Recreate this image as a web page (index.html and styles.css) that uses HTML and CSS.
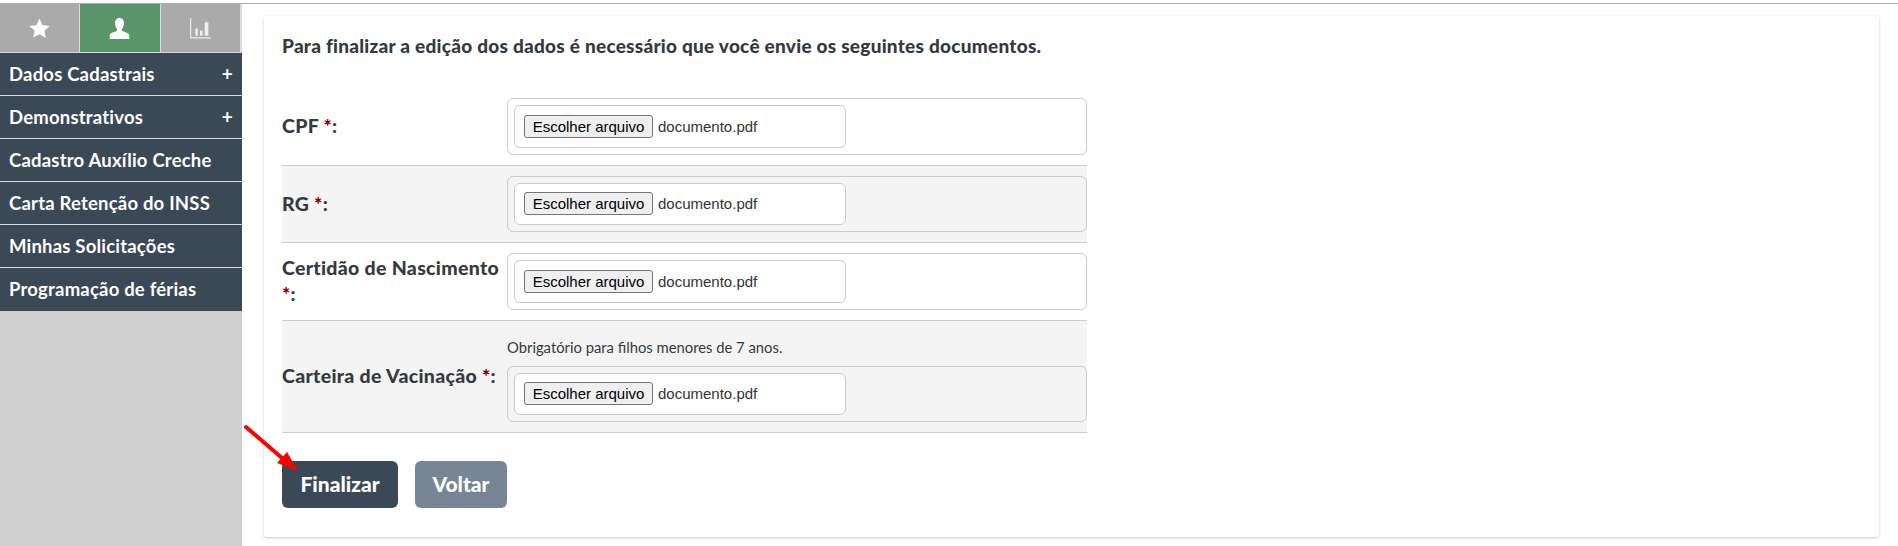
FILE: index.html
```html
<!DOCTYPE html>
<html lang="pt-BR">
<head>
<meta charset="utf-8">
<title>Finalizar edição</title>
<link rel="stylesheet" href="styles.css">
</head>
<body>
<div class="page">
  <aside class="sidebar">
    <div class="tabs">
      <div class="tab">
        <svg width="21" height="21" viewBox="0 0 20 20"><path fill="#fff" d="M10 .5l2.900 6.400 6.900.7-5.200 4.600 1.500 6.800L10 15.500 3.900 18.600l1.500-6.800L.2 7.600l6.900-.7z"/></svg>
      </div>
      <div class="tab tab-active">
        <svg width="21" height="21" viewBox="0 0 20 20"><path fill="#fff" d="M10 0c3 0 4.200 2.200 4.200 5 0 2.400-.8 4.300-1.800 5.500-.5.600-.4 1.500.3 1.800 2.400 1 6.600 1.800 6.600 4.200V20H.7v-3.500c0-2.400 4.200-3.200 6.600-4.200.7-.3.8-1.200.3-1.800C6.600 9.300 5.800 7.400 5.800 5 5.800 2.200 7 0 10 0z"/></svg>
      </div>
      <div class="tab">
        <svg width="21" height="21" viewBox="0 0 20 20"><path fill="none" stroke="#eee" stroke-width="1.100" d="M.6 0v19H20"/><path fill="#eee" d="M5 10h2.500v7H5zM9.500 12H12v5H9.500zM14 4h3.500v13H14z"/></svg>
      </div>
    </div>
    <nav class="menu">
      <a class="menu-item"><span>Dados Cadastrais</span><b class="plus">+</b></a>
      <a class="menu-item"><span>Demonstrativos</span><b class="plus">+</b></a>
      <a class="menu-item"><span>Cadastro Auxílio Creche</span></a>
      <a class="menu-item"><span>Carta Retenção do INSS</span></a>
      <a class="menu-item"><span>Minhas Solicitações</span></a>
      <a class="menu-item"><span>Programação de férias</span></a>
    </nav>
  </aside>
  <main class="main">
    <section class="card">
      <h1 class="title">Para finalizar a edição dos dados é necessário que você envie os seguintes documentos.</h1>
      <form class="form">
        <div class="row">
          <label class="label">CPF <i>*</i>:</label>
          <div class="field">
            <div class="box"><div class="file"><button type="button" class="file-btn">Escolher arquivo</button><span class="file-name">documento.pdf</span></div></div>
          </div>
        </div>
        <div class="row row-alt">
          <label class="label">RG <i>*</i>:</label>
          <div class="field">
            <div class="box"><div class="file"><button type="button" class="file-btn">Escolher arquivo</button><span class="file-name">documento.pdf</span></div></div>
          </div>
        </div>
        <div class="row">
          <label class="label">Certidão de Nascimento <i>*</i>:</label>
          <div class="field">
            <div class="box"><div class="file"><button type="button" class="file-btn">Escolher arquivo</button><span class="file-name">documento.pdf</span></div></div>
          </div>
        </div>
        <div class="row row-alt row-hint">
          <label class="label">Carteira de Vacinação <i>*</i>:</label>
          <div class="field">
            <p class="hint">Obrigatório para filhos menores de 7 anos.</p>
            <div class="box"><div class="file"><button type="button" class="file-btn">Escolher arquivo</button><span class="file-name">documento.pdf</span></div></div>
          </div>
        </div>
        <div class="actions">
          <button type="button" class="btn btn-primary">Finalizar</button>
          <button type="button" class="btn btn-secondary">Voltar</button>
        </div>
      </form>
    </section>
  </main>
</div>
<svg class="arrow" width="60" height="52" viewBox="0 0 60 52"><path d="M3 3L46 40" stroke="#f00" stroke-width="4" stroke-linecap="round" fill="none"/><path d="M55 47L34 39L44 28z" fill="#f00"/></svg>
</body>
</html>
```

FILE: styles.css
```css
* { box-sizing: border-box; }
html, body { margin: 0; height: 100%; }
body {
  padding-top: 3px;
  background: #fff;
  font-family: "Lato", "Open Sans", sans-serif;
  color: #343a40;
  overflow: hidden;
  position: relative;
}
.page {
  display: flex;
  height: 543px;
  border-top: 1px solid #aaa;
}
.sidebar {
  width: 242px;
  flex: none;
  background: #cfcfcf;
}
.tabs {
  display: flex;
  height: 49px;
  border-bottom: 1px solid #d9d9d9;
}
.tab {
  flex: 1;
  background: #aaa;
  display: flex;
  align-items: center;
  justify-content: center;
  border-left: 1px solid #ddd;
}
.tab:first-child { border-left: 0; }
.tab:last-child { border-right: 2px solid #ddd; }
.tab-active { background: #5a9669; }
.menu-item {
  display: flex;
  justify-content: space-between;
  align-items: center;
  height: 43px;
  padding: 0 9px 1px;
  background: #3b4856;
  border-bottom: 1px solid #d9d9d9;
  color: #fff;
  font-size: 18.5px;
  font-weight: 700;
  letter-spacing: .2px;
}
.menu-item:last-child { border-bottom: 0; }
.plus { font-size: 19px; font-weight: 700; }
.main {
  flex: 1;
  padding: 12px 19px 8px 22px;
}
.card {
  height: 521px;
  padding: 19px 18px 0;
  background: #fff;
  border-radius: 3px;
  box-shadow: 0 1px 3px rgba(0, 0, 0, .22);
}
.title {
  margin: 0;
  height: 53px;
  font-size: 19px;
  font-weight: 900;
  line-height: 22px;
  letter-spacing: .25px;
}
.form { width: 805px; }
.row {
  display: flex;
  align-items: center;
  padding: 10px 0;
  border-bottom: 1px solid #ccc;
}
.row-alt { background: #f4f4f4; }
.label {
  width: 225px;
  flex: none;
  font-size: 19.5px;
  font-weight: 900;
  line-height: 26px;
  letter-spacing: .3px;
}
.label i { color: #8b0000; font-style: normal; }
.field { flex: 1; }
.hint {
  margin: 6px 0 9px;
  font-size: 14.8px;
  line-height: 20px;
}
.box {
  height: 56.5px;
  padding: 6px;
  border: 1px solid #ccc;
  border-radius: 6px;
}
.file {
  display: flex;
  align-items: center;
  width: 332px;
  height: 100%;
  padding: 0 9px;
  background: #fff;
  border: 1px solid #ccc;
  border-radius: 6px;
  font-family: "Liberation Sans", Arial, sans-serif;
  font-size: 15px;
}
.file-btn {
  width: 129px;
  height: 23px;
  padding: 0;
  margin-right: 5px;
  background: #efefef;
  border: 1px solid #767676;
  border-radius: 3px;
  color: #000;
  font: inherit;
}
.file-name { color: #333; }
.actions {
  display: flex;
  gap: 17px;
  margin-top: 28px;
}
.btn {
  height: 47px;
  padding: 0 0 2px;
  border: 0;
  border-radius: 6px;
  color: #fff;
  font-family: inherit;
  font-size: 21px;
  font-weight: 900;
}
.btn-primary { width: 116px; background: #3b4856; }
.btn-secondary { width: 92px; background: #778594; }
.arrow {
  position: absolute;
  left: 243px;
  top: 424px;
}
```
